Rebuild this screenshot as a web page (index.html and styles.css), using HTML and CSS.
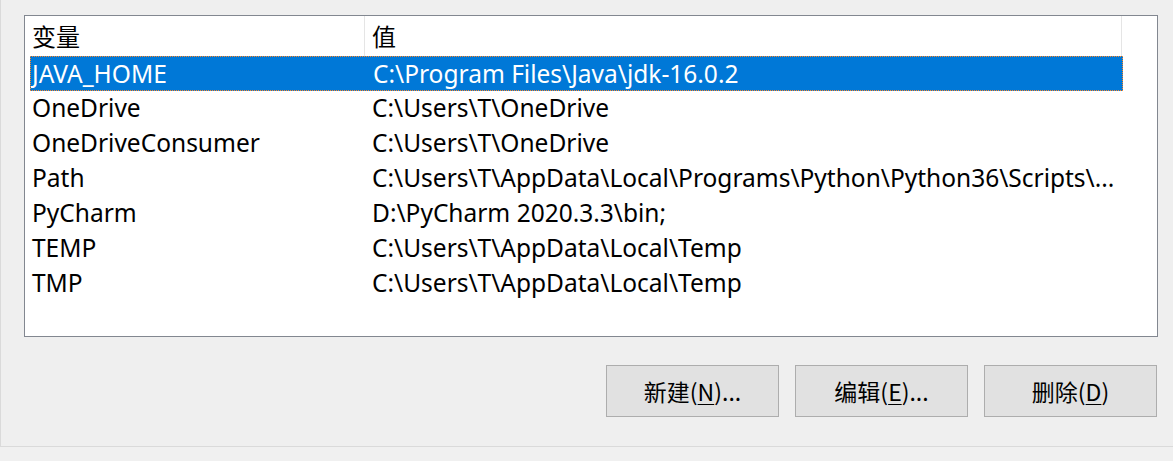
FILE: index.html
```html
<!DOCTYPE html>
<html lang="zh-CN">
<head>
<meta charset="utf-8">
<title>环境变量</title>
<link rel="stylesheet" href="styles.css">
</head>
<body>
<div class="frame">
  <div class="listview">
    <div class="header">
      <div class="hcell col1">变量</div>
      <div class="hcell col2">值</div>
    </div>
    <div class="rows">
      <div class="row selected"><span class="c1">JAVA_HOME</span><span class="c2">C:\Program Files\Java\jdk-16.0.2</span></div>
      <div class="row"><span class="c1">OneDrive</span><span class="c2">C:\Users\T\OneDrive</span></div>
      <div class="row"><span class="c1">OneDriveConsumer</span><span class="c2">C:\Users\T\OneDrive</span></div>
      <div class="row"><span class="c1">Path</span><span class="c2">C:\Users\T\AppData\Local\Programs\Python\Python36\Scripts\...</span></div>
      <div class="row"><span class="c1">PyCharm</span><span class="c2">D:\PyCharm 2020.3.3\bin;</span></div>
      <div class="row"><span class="c1">TEMP</span><span class="c2">C:\Users\T\AppData\Local\Temp</span></div>
      <div class="row"><span class="c1">TMP</span><span class="c2">C:\Users\T\AppData\Local\Temp</span></div>
    </div>
  </div>
  <div class="buttons">
    <button class="btn">新建(<u>N</u>)...</button>
    <button class="btn">编辑(<u>E</u>)...</button>
    <button class="btn">删除(<u>D</u>)</button>
  </div>
</div>
</body>
</html>
```
FILE: styles.css
```css
html, body {
  margin: 0;
  padding: 0;
  background: #f0f0f0;
}
body {
  width: 1173px;
  height: 461px;
  overflow: hidden;
  font-family: "Noto Sans", "Noto Sans CJK SC", sans-serif;
  color: #000;
}
.frame {
  box-sizing: border-box;
  height: 447px;
  border-left: 1px solid #dadada;
  border-bottom: 1px solid #dadada;
  background: #efefef;
  padding: 15px 0 0 23px;
}
.listview {
  box-sizing: border-box;
  width: 1134px;
  height: 322px;
  border: 1px solid #828790;
  background: #fff;
}
.header {
  display: flex;
  height: 40px;
}
.hcell {
  box-sizing: border-box;
  border-right: 1px solid #e5e5e5;
  padding-left: 7px;
  font-family: "Noto Sans CJK SC", sans-serif;
  font-size: 24px;
  line-height: 39px;
  height: 40px;
}
.col1 { width: 340px; }
.col2 { width: 757px; }
.rows {
  margin-left: 5px;
  width: 1093px;
}
.row {
  box-sizing: border-box;
  display: grid;
  grid-template-columns: 340px 1fr;
  height: 35px;
  line-height: 34px;
  font-size: 24.5px;
  white-space: nowrap;
}
.row span {
  padding-left: 2px;
  overflow: hidden;
}
.row.selected {
  background: #0078d7;
  color: #fff;
  border: 1px dotted #ff8728;
  line-height: 33px;
}
.row.selected span:first-child { padding-left: 1px; }
.buttons {
  display: flex;
  justify-content: flex-end;
  gap: 16px;
  margin-top: 28px;
  padding-right: 16px;
}
.btn {
  box-sizing: border-box;
  width: 173px;
  height: 52px;
  background: #e1e1e1;
  border: 1px solid #adadad;
  border-radius: 0;
  font-family: "Noto Sans CJK SC", sans-serif;
  font-size: 23px;
  color: #000;
  padding: 0;
  margin: 0;
}
.btn u {
  text-decoration-thickness: 1px;
  text-underline-offset: 3px;
}
```
